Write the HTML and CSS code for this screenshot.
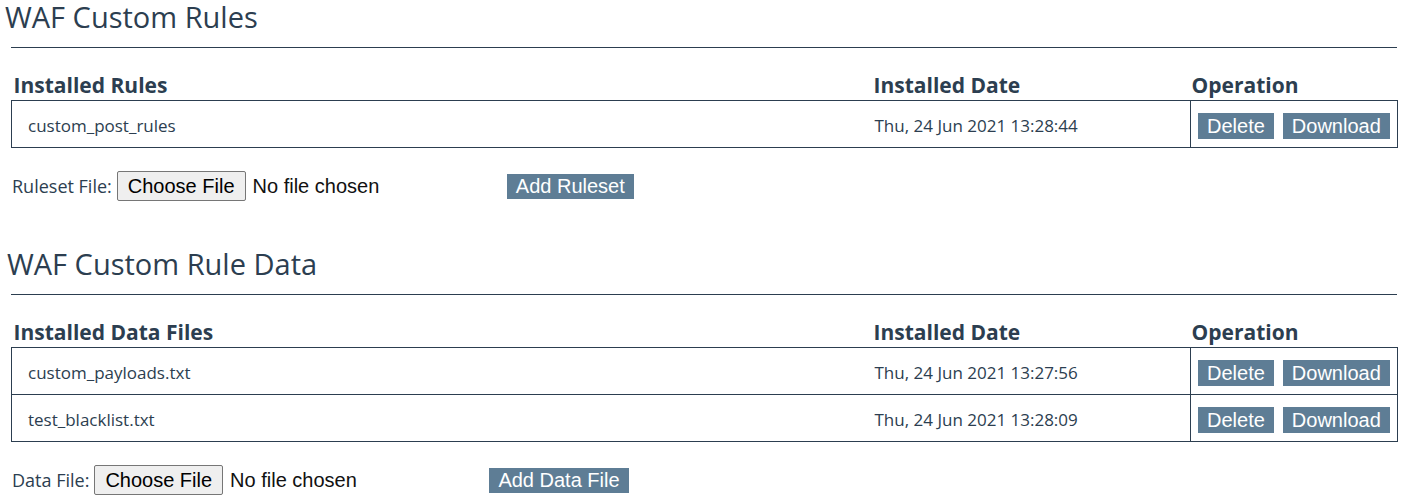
FILE: index.html
```html
<!DOCTYPE html>
<html lang="en">
<head>
<meta charset="utf-8">
<title>WAF Custom Rules</title>
<link rel="stylesheet" href="styles.css">
</head>
<body>
<section class="panel">
  <h1 class="title">WAF Custom Rules</h1>
  <hr class="rule">
  <table class="list">
    <colgroup><col class="c-name"><col class="c-date"><col class="c-ops"></colgroup>
    <thead>
      <tr><th>Installed Rules</th><th class="h-date">Installed Date</th><th class="h-ops">Operation</th></tr>
    </thead>
    <tbody>
      <tr>
        <td class="name">custom_post_rules</td>
        <td class="date">Thu, 24 Jun 2021 13:28:44</td>
        <td class="ops"><button class="btn">Delete</button><button class="btn">Download</button></td>
      </tr>
    </tbody>
  </table>
  <form class="upload">
    <label class="upload-label" for="ruleset">Ruleset File:</label>
    <input class="file" id="ruleset" type="file">
    <button class="btn add add-ruleset" type="button">Add Ruleset</button>
  </form>
</section>

<section class="panel panel-next">
  <h2 class="title title-sub">WAF Custom Rule Data</h2>
  <hr class="rule">
  <table class="list">
    <colgroup><col class="c-name"><col class="c-date"><col class="c-ops"></colgroup>
    <thead>
      <tr><th>Installed Data Files</th><th class="h-date">Installed Date</th><th class="h-ops">Operation</th></tr>
    </thead>
    <tbody>
      <tr>
        <td class="name">custom_payloads.txt</td>
        <td class="date">Thu, 24 Jun 2021 13:27:56</td>
        <td class="ops"><button class="btn">Delete</button><button class="btn">Download</button></td>
      </tr>
      <tr>
        <td class="name">test_blacklist.txt</td>
        <td class="date">Thu, 24 Jun 2021 13:28:09</td>
        <td class="ops"><button class="btn">Delete</button><button class="btn">Download</button></td>
      </tr>
    </tbody>
  </table>
  <form class="upload">
    <label class="upload-label" for="datafile">Data File:</label>
    <input class="file" id="datafile" type="file">
    <button class="btn add add-data" type="button">Add Data File</button>
  </form>
</section>
</body>
</html>
```
FILE: styles.css
```css
html, body {
  margin: 0;
  padding: 0;
  background: #ffffff;
}
body {
  font-family: "Open Sans", "Noto Sans", sans-serif;
  color: #2c3e50;
  width: 1408px;
}
.panel {
  display: flex;
  flex-direction: column;
}
.panel-next {
  margin-top: 46px;
}
.title {
  margin: 0;
  padding-left: 5px;
  font-size: 29px;
  font-weight: 400;
  line-height: 34px;
  color: #2c3e50;
}
.title-sub {
  padding-left: 7px;
}
.rule {
  margin: 13px 11px 0;
  height: 0;
  border: 0;
  border-top: 1px solid #2c3e50;
}
.list {
  margin: 23px 11px 0;
  width: 1386px;
  border-collapse: collapse;
  table-layout: fixed;
}
.c-name { width: 862px; }
.c-date { width: 317px; }
.c-ops { width: 207px; }
.list th {
  text-align: left;
  font-size: 21px;
  font-weight: 700;
  line-height: 28px;
  padding: 0 0 1px 2px;
}
.list th.h-date { padding-left: 0; }
.list th.h-ops { padding-left: 1px; }
.list tbody tr {
  border: 1px solid #2c3e50;
}
.list td {
  height: 46px;
  padding: 2px 0 0 0;
  box-sizing: border-box;
  font-size: 17px;
  line-height: 23px;
  vertical-align: middle;
}
.list td.name { padding-left: 16px; }
.list td.date { padding-left: 1px; }
.list td.ops {
  border-left: 1px solid #2c3e50;
  padding: 12px 0 8px 7px;
  vertical-align: top;
}
.ops {
  white-space: nowrap;
}
.btn {
  display: inline-block;
  height: 26px;
  margin: 0;
  padding: 0 9px;
  border: 0;
  border-radius: 0;
  background: #5e7d95;
  color: #ffffff;
  font-family: "Liberation Sans", Arial, sans-serif;
  font-size: 20px;
  line-height: 26px;
  vertical-align: top;
}
.ops .btn + .btn {
  margin-left: 9px;
}
.upload {
  display: flex;
  align-items: center;
  margin: 23px 0 0 12px;
}
.upload-label {
  font-size: 18px;
  line-height: 24px;
  margin-right: 5px;
}
.file {
  width: 270px;
  margin: 0;
  padding: 0;
  height: 30px;
  font-family: "Liberation Sans", Arial, sans-serif;
  font-size: 20px;
  color: #111111;
}
.file::file-selector-button {
  font: inherit;
  height: 30px;
  margin: 0 7px 0 0;
  padding: 0 10px;
  border: 1px solid #767676;
  border-radius: 2px;
  background: #efefef;
  color: #000000;
}
.add {
  height: 25px;
  line-height: 25px;
}
.add-ruleset { margin-left: 120px; }
.add-data { margin-left: 125px; }
```
